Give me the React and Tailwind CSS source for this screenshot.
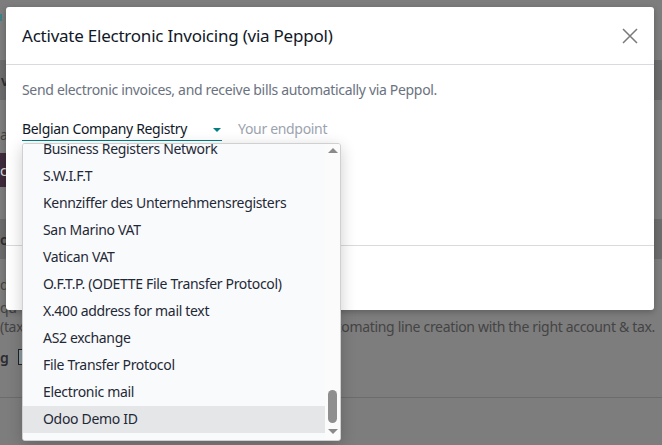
import React from 'react';

const options = [
  'Business Registers Network',
  'S.W.I.F.T',
  'Kennziffer des Unternehmensregisters',
  'San Marino VAT',
  'Vatican VAT',
  'O.F.T.P. (ODETTE File Transfer Protocol)',
  'X.400 address for mail text',
  'AS2 exchange',
  'File Transfer Protocol',
  'Electronic mail',
  'Odoo Demo ID',
];

const App = () => {
  return (
    <div className="relative w-[662px] h-[445px] overflow-hidden bg-[#7d7d7d] font-['Noto_Sans',sans-serif] text-[14px] tracking-[-0.32px]">
      {/* Page behind the backdrop */}
      <div className="flex flex-col h-full text-[#2c2c30]">
        <div className="h-[60px] pt-[14px]">
          <div className="w-[2px] h-[7px] bg-[#3f8088]" />
        </div>
        <div className="h-[40px] bg-[#6c6c6c] flex items-center font-semibold pl-[1px]">v</div>
        <div className="h-[53px] pt-[25px] leading-[20px] text-[#444]">a</div>
        <div className="h-[34px] w-[40px] bg-[#3f2b3c] flex items-center text-[#ddd]">cl</div>
        <div className="h-[32px]" />
        <div className="h-[40px] bg-[#6c6c6c] flex items-center font-semibold">o</div>
        <div className="h-[16px]" />
        <div className="h-[20px] leading-[20px] text-[#444]">d</div>
        <div className="h-[23px] pt-[3px] leading-[20px] text-[#444]">qu</div>
        <div className="h-[20px] mt-[-1px] leading-[20px] flex justify-between pr-[7px] text-[#444]">
          <span>(tax</span>
          <span>automating line creation with the right account &amp; tax.</span>
        </div>
        <div className="h-[38px] mt-[1px] flex items-center gap-[10px] font-semibold">
          <span>g</span>
          <span className="w-[7px] h-[16px] border border-[#222] bg-[#88999e]" />
        </div>
        <div className="mt-[21px] border-t border-[#6c6c6c]" />
      </div>

      {/* Dialog */}
      <div className="absolute left-[6px] top-[7px] w-[648px] h-[303px] bg-white rounded-[3px] flex flex-col shadow-[0_2px_6px_rgba(0,0,0,0.25)]">
        <div className="h-[58px] shrink-0 px-[16px] flex items-center justify-between border-b border-[#d8dadd]">
          <h4 className="text-[17px] tracking-[-0.23px] text-[#111827]">Activate Electronic Invoicing (via Peppol)</h4>
          <svg width="16" height="16" viewBox="0 0 16 16" className="text-[#7a7a7a]">
            <path d="M1 1L15 15M15 1L1 15" stroke="currentColor" strokeWidth="1.5" fill="none" />
          </svg>
        </div>
        <div className="h-[180px] shrink-0 px-[16px] pt-[15px]">
          <p className="leading-[20px] text-[#6b7280]">Send electronic invoices, and receive bills automatically via Peppol.</p>
          <div className="mt-[19px] flex items-start gap-[16px]">
            <div className="relative w-[200px] h-[22px] border-b border-[#017e84] text-[#111827] leading-[20px]">
              Belgian Company Registry
              <span className="absolute right-[1px] top-[9px] border-x-[4px] border-x-transparent border-t-[4px] border-t-[#017e84]" />
            </div>
            <span className="leading-[20px] text-[#9ca3af]">Your endpoint</span>
          </div>
        </div>
        <div className="flex-1 border-t border-[#d8dadd]" />
      </div>

      {/* Open select list */}
      <div className="absolute left-[22px] top-[143px] w-[319px] h-[298px] flex bg-white rounded-[3px] overflow-hidden border border-[#d0d0d0] shadow-[0_4px_16px_rgba(0,0,0,0.2)]">
        <ul className="flex-1 -mt-[8px] bg-[#f9fafb]">
          {options.map((opt) => (
            <li
              key={opt}
              className={`h-[27px] pl-[20px] pb-[2px] flex items-center text-[#1f2937] ${opt === 'Odoo Demo ID' ? 'bg-[#e5e6e7]' : ''}`}
            >
              {opt}
            </li>
          ))}
        </ul>
        <div className="relative w-[15px] bg-[#fbfbfb]">
          <span className="absolute left-[3px] top-[4px] border-x-[5px] border-x-transparent border-b-[5px] border-b-[#8a8a8a]" />
          <span className="absolute left-[3px] top-[246px] w-[9px] h-[33px] rounded-full bg-[#8f8f8f]" />
          <span className="absolute left-[3px] top-[285px] border-x-[5px] border-x-transparent border-t-[5px] border-t-[#8a8a8a]" />
        </div>
      </div>
    </div>
  );
};

export default App;
